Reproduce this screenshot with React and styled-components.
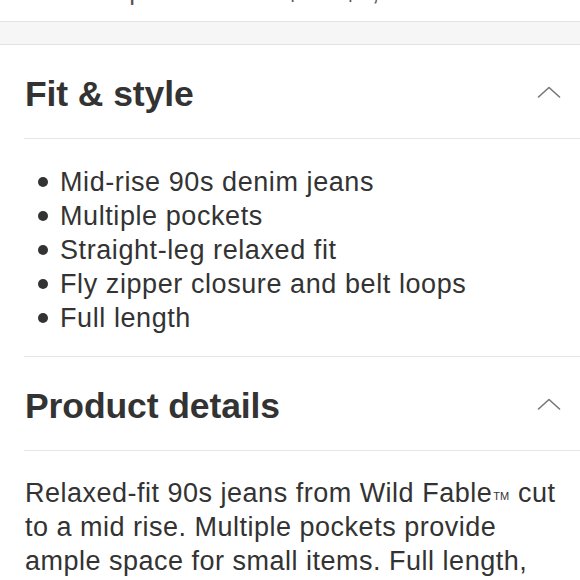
import React from "react";
import styled, { createGlobalStyle } from "styled-components";

const GlobalStyle = createGlobalStyle`
  html, body {
    margin: 0;
    padding: 0;
    background: #ffffff;
  }
  body {
    font-family: "Liberation Sans", Arial, Helvetica, sans-serif;
    color: #333333;
    -webkit-font-smoothing: antialiased;
  }
`;

const Page = styled.div`
  width: 580px;
  height: 580px;
  overflow: hidden;
  background: #ffffff;
`;

const PromoClip = styled.div`
  height: 21px;
  overflow: hidden;
`;

const PromoText = styled.p`
  margin: -23px 0 0;
  padding-left: 93px;
  font-size: 26px;
  line-height: 28px;
  color: #555555;
  white-space: nowrap;
`;

const Band = styled.div`
  height: 22px;
  background: #f6f6f6;
  border-top: 1px solid #e3e3e3;
  border-bottom: 1px solid #e3e3e3;
`;

const Section = styled.section`
  padding-left: 24px;
`;

const SectionHead = styled.div`
  height: 93px;
  display: flex;
  align-items: center;
  justify-content: space-between;
  padding-right: 19px;
  border-bottom: 1px solid #e6e6e6;
`;

const Title = styled.h2`
  margin: 6px 0 0;
  padding-left: 1px;
  font-size: 35.5px;
  font-weight: 700;
  color: #333333;
  letter-spacing: -0.1px;
`;

const Chevron = styled.svg`
  width: 24px;
  height: 12px;
  margin-top: ${(p) => p.$offset || 0}px;
  flex: none;
`;

const BulletList = styled.ul`
  margin: 0;
  padding: 26px 0 21px 36px;
  list-style: none;
  border-bottom: 1px solid #e6e6e6;
`;

const Bullet = styled.li`
  position: relative;
  font-size: 27px;
  line-height: 34px;
  letter-spacing: 0.58px;
  color: #333333;

  &::before {
    content: "";
    position: absolute;
    left: -22px;
    top: 12px;
    width: 10px;
    height: 10px;
    border-radius: 50%;
    background: #333333;
  }
`;

const Body = styled.p`
  margin: 0;
  padding: 25px 20px 0 1px;
  font-size: 27px;
  line-height: 34px;
  letter-spacing: 0.5px;
  color: #333333;
`;

const Tm = styled.span`
  font-size: 11px;
  line-height: 0;
  vertical-align: 2px;
  letter-spacing: 0;
  margin: 0 1px;
`;

function Caret({ offset }) {
  return (
    <Chevron viewBox="0 0 24 12" $offset={offset}>
      <path
        d="M1.5 11 L12 1.5 L22.5 11"
        fill="none"
        stroke="#777777"
        strokeWidth="1.6"
        strokeLinecap="round"
        strokeLinejoin="round"
      />
    </Chevron>
  );
}

const fitItems = [
  "Mid-rise 90s denim jeans",
  "Multiple pockets",
  "Straight-leg relaxed fit",
  "Fly zipper closure and belt loops",
  "Full length",
];

export default function App() {
  return (
    <>
      <GlobalStyle />
      <Page>
        <PromoClip>
          <PromoText>on purchases of $50–$1,000</PromoText>
        </PromoClip>
        <Band />

        <Section>
          <SectionHead>
            <Title>Fit &amp; style</Title>
            <Caret offset={1} />
          </SectionHead>
          <BulletList>
            {fitItems.map((item) => (
              <Bullet key={item}>{item}</Bullet>
            ))}
          </BulletList>
        </Section>

        <Section>
          <SectionHead>
            <Title>Product details</Title>
            <Caret offset={1} />
          </SectionHead>
          <Body>
            Relaxed-fit 90s jeans from Wild Fable<Tm>TM</Tm> cut to a mid rise.
            Multiple pockets provide ample space for small items. Full length,
            straight-leg silhouette.
          </Body>
        </Section>
      </Page>
    </>
  );
}
